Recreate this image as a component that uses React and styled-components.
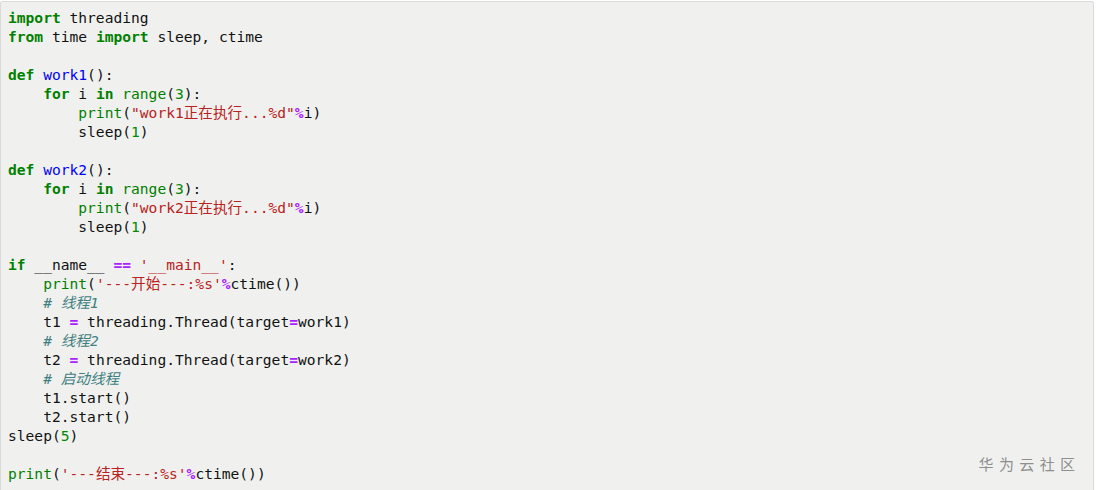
import React from "react";
import styled, { createGlobalStyle } from "styled-components";

const Global = createGlobalStyle`
  html, body { margin: 0; padding: 0; background: #ffffff; }
  body { width: 1100px; height: 490px; overflow: hidden; }
`;

const Page = styled.div`
  position: relative;
  width: 1100px;
  height: 490px;
  padding-top: 1px;
  box-sizing: border-box;
  overflow: hidden;
`;

const CodeBox = styled.pre`
  position: relative;
  margin: 0;
  width: 1094px;
  height: 500px;
  box-sizing: border-box;
  background: #f0f1ef;
  border: 1px solid #d9dbd8;
  border-radius: 2px;
  padding: 6px 0 0 7px;
  font-family: "DejaVu Sans Mono", "Noto Sans CJK SC", monospace;
  font-size: 14.6px;
  line-height: 19px;
  color: #111;
  white-space: pre;
`;

const Line = styled.div`
  height: 19px;
`;

const colors = {
  kw: { color: "#008000", weight: 700 },
  bi: { color: "#008000", weight: 400 },
  def: { color: "#0000ff", weight: 400 },
  str: { color: "#ba2121", weight: 400 },
  num: { color: "#008800", weight: 400 },
  op: { color: "#aa22ff", weight: 700 },
  cm: { color: "#408080", weight: 400 },
};

const Tok = styled.span`
  color: ${(p) => colors[p.$t].color};
  font-weight: ${(p) => colors[p.$t].weight};
  font-style: ${(p) => (p.$t === "cm" ? "italic" : "normal")};
`;

const Watermark = styled.div`
  position: absolute;
  right: 24px;
  bottom: 16px;
  font-family: "Noto Sans CJK SC", sans-serif;
  font-size: 15px;
  letter-spacing: 1px;
  color: #8e8e8e;
`;

const lines = [
  [["kw", "import"], " threading"],
  [["kw", "from"], " time ", ["kw", "import"], " sleep, ctime"],
  [],
  [["kw", "def"], " ", ["def", "work1"], "():"],
  ["    ", ["kw", "for"], " i ", ["kw", "in"], " ", ["bi", "range"], "(", ["num", "3"], "):"],
  ["        ", ["bi", "print"], "(", ["str", "\"work1正在执行...%d\""], ["op", "%"], "i)"],
  ["        sleep(", ["num", "1"], ")"],
  [],
  [["kw", "def"], " ", ["def", "work2"], "():"],
  ["    ", ["kw", "for"], " i ", ["kw", "in"], " ", ["bi", "range"], "(", ["num", "3"], "):"],
  ["        ", ["bi", "print"], "(", ["str", "\"work2正在执行...%d\""], ["op", "%"], "i)"],
  ["        sleep(", ["num", "1"], ")"],
  [],
  [["kw", "if"], " __name__ ", ["op", "=="], " ", ["str", "'__main__'"], ":"],
  ["    ", ["bi", "print"], "(", ["str", "'---开始---:%s'"], ["op", "%"], "ctime())"],
  ["    ", ["cm", "# 线程1"]],
  ["    t1 ", ["op", "="], " threading.Thread(target", ["op", "="], "work1)"],
  ["    ", ["cm", "# 线程2"]],
  ["    t2 ", ["op", "="], " threading.Thread(target", ["op", "="], "work2)"],
  ["    ", ["cm", "# 启动线程"]],
  ["    t1.start()"],
  ["    t2.start()"],
  ["sleep(", ["num", "5"], ")"],
  [],
  [["bi", "print"], "(", ["str", "'---结束---:%s'"], ["op", "%"], "ctime())"],
];

export default function App() {
  return (
    <Page>
      <Global />
      <CodeBox>
        {lines.map((parts, i) => (
          <Line key={i}>
            {parts.map((p, j) =>
              typeof p === "string" ? (
                <React.Fragment key={j}>{p}</React.Fragment>
              ) : (
                <Tok key={j} $t={p[0]}>
                  {p[1]}
                </Tok>
              )
            )}
          </Line>
        ))}
      </CodeBox>
      <Watermark>华 为 云 社 区</Watermark>
    </Page>
  );
}
